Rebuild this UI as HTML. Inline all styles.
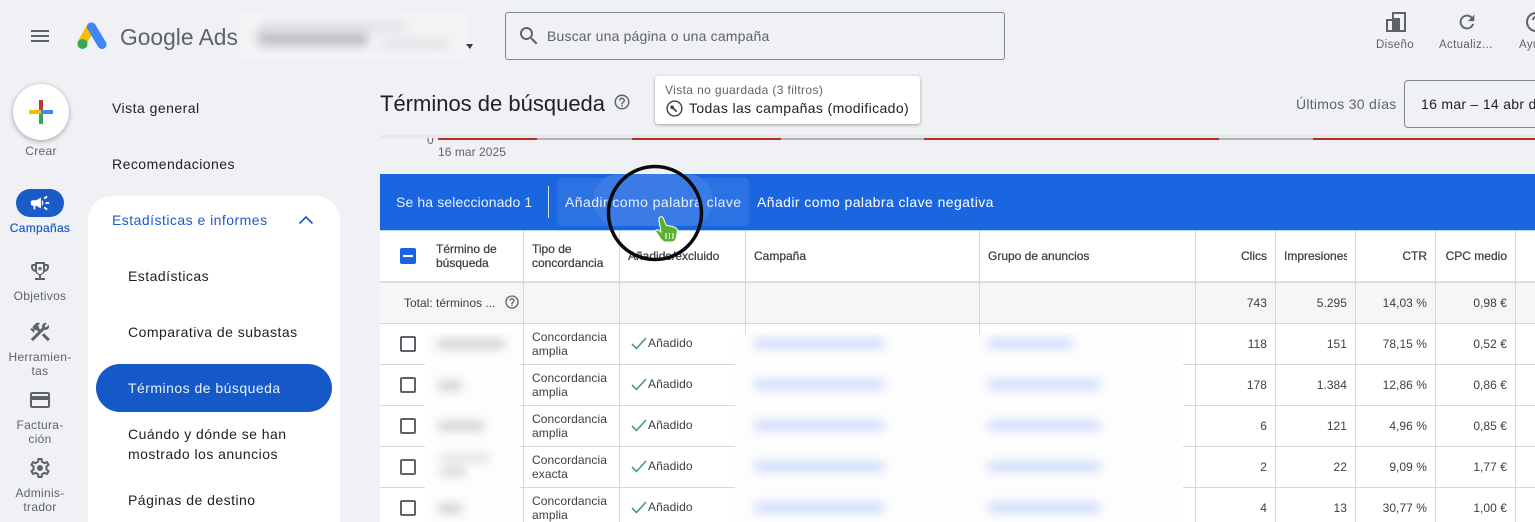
<!DOCTYPE html>
<html lang="es"><head><meta charset="utf-8"><title>Google Ads</title>
<style>
html,body{margin:0;padding:0;width:1535px;height:522px;overflow:hidden;background:#eff1f4}
body{position:relative;font-family:"Liberation Sans",sans-serif;color:#202124}
.t,.b,svg{position:absolute}
.t{white-space:nowrap;line-height:14px}
.nav{font-size:14px;letter-spacing:.47px;color:#202124;left:112px}
.sub{left:128px}
.rail{font-size:12px;letter-spacing:.3px;color:#5f6368;width:80px;text-align:center;left:0;line-height:14px;white-space:normal}
.h{font-size:12px;color:#3c4043;line-height:14px;letter-spacing:0;-webkit-text-stroke:.25px #3c4043}
.c{font-size:12px;color:#3c4043;letter-spacing:.08px;line-height:14px}
.n{font-size:12px;color:#3c4043;text-align:right;letter-spacing:.05px}
.v{background:#d5d7db;width:1px}
.l{background:#d5d7db;height:1px}
.cb{width:12px;height:12px;border:2px solid #5f6368;border-radius:2px;left:400px;background:#fff}
.blur{filter:blur(5px);border-radius:3px}
</style></head><body>

<!-- top bar -->
<svg style="left:28px;top:24px" width="24" height="24" viewBox="0 0 24 24"><path fill="#5f6368" d="M3 18h18v-2H3v2zm0-5h18v-2H3v2zm0-7v2h18V6H3z"/></svg>
<svg style="left:76px;top:21px" width="32" height="29" viewBox="0 0 32 29">
<path d="M15 6 L6 22" stroke="#fbbc04" stroke-width="9" stroke-linecap="round"/>
<path d="M15.5 6 L26 23.5" stroke="#4285f4" stroke-width="9" stroke-linecap="round"/>
<circle cx="6.5" cy="23" r="5" fill="#34a853"/></svg>
<div class="t" style="left:120px;top:24px;font-size:22.8px;line-height:26px;color:#5f6368">Google Ads</div>
<div class="b" style="left:240px;top:12px;width:228px;height:48px;background:#f3f4f6;filter:blur(2px)"></div>
<div class="b blur" style="left:258px;top:30px;width:110px;height:16px;background:#bfc1c4"></div>
<div class="b blur" style="left:262px;top:23px;width:145px;height:8px;background:#dcdee1"></div>
<div class="b blur" style="left:382px;top:41px;width:66px;height:6px;background:#d5d7da"></div>
<svg style="left:465px;top:42px" width="10" height="8"><path d="M1 2h7L5 7z" fill="#3c4043"/></svg>

<div class="b" style="left:505px;top:12px;width:498px;height:46px;border:1px solid #80868b;border-radius:3px"></div>
<svg style="left:517px;top:24px" width="24" height="24" viewBox="0 0 24 24"><path fill="#5f6368" d="M15.5 14h-.79l-.28-.27A6.47 6.47 0 0 0 16 9.5 6.5 6.5 0 1 0 9.5 16c1.61 0 3.09-.59 4.23-1.57l.27.28v.79l5 4.99L20.49 19l-4.99-5zm-6 0C7.01 14 5 11.99 5 9.5S7.01 5 9.5 5 14 7.01 14 9.5 11.99 14 9.5 14z"/></svg>
<div class="t" style="left:547px;top:29px;font-size:14px;color:#5f6368;letter-spacing:.17px">Buscar una página o una campaña</div>

<svg style="left:1385px;top:12px" width="21" height="20" viewBox="0 0 21 20"><path fill="#5f6368" fill-rule="evenodd" d="M1 7h6V0h14v20H1zM3 9v9h4V9zM9 2v16h10V2z"/><rect x="9" y="6" width="6" height="12" fill="#5f6368"/></svg>
<div class="t" style="left:1376px;top:38px;font-size:11.5px;letter-spacing:.36px;color:#5f6368">Diseño</div>
<svg style="left:1456px;top:11px" width="22" height="22" viewBox="0 0 24 24"><path fill="#5f6368" d="M17.65 6.35A7.96 7.96 0 0 0 12 4a8 8 0 1 0 7.73 10h-2.08A6 6 0 1 1 12 6c1.66 0 3.14.69 4.22 1.78L13 11h7V4l-2.35 2.35z"/></svg>
<div class="t" style="left:1439px;top:38px;font-size:11.5px;letter-spacing:.35px;color:#5f6368">Actualiz...</div>
<svg style="left:1524px;top:10px" width="24" height="24" viewBox="0 0 24 24"><path fill="#5f6368" d="M11 18h2v-2h-2v2zm1-16a10 10 0 1 0 0 20 10 10 0 0 0 0-20zm0 18a8 8 0 1 1 0-16 8 8 0 0 1 0 16zm0-14a4 4 0 0 0-4 4h2a2 2 0 1 1 4 0c0 2-3 1.75-3 5h2c0-2.25 3-2.5 3-5a4 4 0 0 0-4-4z"/></svg>
<div class="t" style="left:1519px;top:38px;font-size:11.5px;letter-spacing:.35px;color:#5f6368">Ayuda</div>

<!-- left rail -->
<div class="b" style="left:13px;top:84px;width:56px;height:56px;border-radius:50%;background:#fff;box-shadow:0 1px 4px rgba(60,64,67,.35),0 2px 6px rgba(60,64,67,.12)"></div>
<div class="b" style="left:39px;top:100px;width:4px;height:12px;background:#b93a32"></div>
<div class="b" style="left:39px;top:112px;width:4px;height:12px;background:#34a853"></div>
<div class="b" style="left:29px;top:110px;width:12px;height:4px;background:#f6b90d"></div>
<div class="b" style="left:41px;top:110px;width:12px;height:4px;background:#4285f4"></div>
<div class="t rail" style="top:144px;left:1px;color:#5f6368">Crear</div>

<div class="b" style="left:16px;top:189px;width:48px;height:28px;border-radius:14px;background:#1a5bc9"></div>
<svg style="left:29px;top:192px" width="22" height="22" viewBox="0 0 24 24"><path fill="#fff" d="M18 11v2h4v-2h-4zm-2 6.61c.96.71 2.21 1.65 3.2 2.39.4-.53.8-1.07 1.2-1.6-.99-.74-2.24-1.68-3.2-2.4-.4.54-.8 1.08-1.2 1.61zM20.4 5.6c-.4-.53-.8-1.07-1.2-1.6-.99.74-2.24 1.68-3.2 2.4.4.53.8 1.07 1.2 1.6.96-.72 2.21-1.65 3.2-2.4zM4 9c-1.1 0-2 .9-2 2v2c0 1.1.9 2 2 2h1v4h2v-4h1l5 3V6L8 9H4zm11.5 3c0-1.33-.58-2.53-1.5-3.35v6.69c.92-.81 1.5-2.01 1.5-3.34z"/></svg>
<div class="t rail" style="top:221px;color:#1a5bc9;-webkit-text-stroke:.2px #1a5bc9">Campañas</div>

<svg style="left:28px;top:259px" width="24" height="24" viewBox="0 0 24 24"><path fill="#5f6368" fill-rule="evenodd" d="M19 5h-2V3H7v2H5c-1.1 0-2 .9-2 2v1c0 2.55 1.92 4.63 4.39 4.94.63 1.5 1.98 2.63 3.61 2.96V19H7v2h10v-2h-4v-3.1c1.63-.33 2.98-1.46 3.61-2.96C19.08 12.63 21 10.55 21 8V7c0-1.1-.9-2-2-2zM5 8V7h2v3.82C5.84 10.4 5 9.3 5 8zm14 0c0 1.3-.84 2.4-2 2.82V7h2v1zM15 12c0 1.65-1.35 3-3 3s-3-1.35-3-3V5h6v7z"/><circle cx="12" cy="9.5" r="1.6" fill="#5f6368"/></svg>
<div class="t rail" style="top:289px">Objetivos</div>

<svg style="left:28px;top:320px" width="24" height="24" viewBox="0 0 24 24"><path fill="#5f6368" d="M13.78 15.3l6 6 2.11-2.16-6-6zM17.5 10c1.93 0 3.5-1.57 3.5-3.5 0-.58-.16-1.12-.41-1.6l-2.7 2.7-1.49-1.49 2.7-2.7c-.48-.25-1.02-.41-1.6-.41C15.57 3 14 4.57 14 6.5c0 .41.08.8.21 1.16l-1.85 1.85-1.78-1.78.71-.71-1.41-1.41L12 3.49c-1.17-1.17-3.07-1.17-4.24 0L4.22 7.03l1.41 1.41H2.81l-.71.71 3.54 3.54.71-.71V9.15l1.41 1.41.71-.71 1.78 1.78-7.41 7.41 2.12 2.12L16.34 9.79c.36.13.75.21 1.16.21z"/></svg>
<div class="t rail" style="top:350px">Herramien-<br>tas</div>

<svg style="left:28px;top:388px" width="24" height="24" viewBox="0 0 24 24"><path fill="#5f6368" d="M20 4H4c-1.11 0-1.99.89-1.99 2L2 18c0 1.11.89 2 2 2h16c1.11 0 2-.89 2-2V6c0-1.11-.89-2-2-2zm0 14H4v-6h16v6zm0-10H4V6h16v2z"/></svg>
<div class="t rail" style="top:418px">Factura-<br>ción</div>

<svg style="left:28px;top:456px" width="24" height="24" viewBox="0 0 24 24"><path fill="#5f6368" d="M19.43 12.98c.04-.32.07-.64.07-.98 0-.34-.03-.66-.07-.98l2.11-1.65c.19-.15.24-.42.12-.64l-2-3.46c-.09-.16-.26-.25-.44-.25-.06 0-.12.01-.17.03l-2.49 1c-.52-.4-1.08-.73-1.69-.98l-.38-2.65C14.46 2.18 14.25 2 14 2h-4c-.25 0-.46.18-.49.42l-.38 2.65c-.61.25-1.17.59-1.69.98l-2.49-1c-.06-.02-.12-.03-.18-.03-.17 0-.34.09-.43.25l-2 3.46c-.13.22-.07.49.12.64l2.11 1.65c-.04.32-.07.65-.07.98 0 .33.03.66.07.98l-2.11 1.65c-.19.15-.24.42-.12.64l2 3.46c.09.16.26.25.44.25.06 0 .12-.01.17-.03l2.49-1c.52.4 1.08.73 1.69.98l.38 2.65c.03.24.24.42.49.42h4c.25 0 .46-.18.49-.42l.38-2.65c.61-.25 1.17-.59 1.69-.98l2.49 1c.06.02.12.03.18.03.17 0 .34-.09.43-.25l2-3.46c.12-.22.07-.49-.12-.64l-2.11-1.65zm-1.98-1.71c.04.31.05.52.05.73 0 .21-.02.43-.05.73l-.14 1.13.89.7 1.08.84-.7 1.21-1.27-.51-1.04-.42-.9.68c-.43.32-.84.56-1.25.73l-1.06.43-.16 1.13-.2 1.35h-1.4l-.19-1.35-.16-1.13-1.06-.43c-.43-.18-.83-.41-1.23-.71l-.91-.7-1.06.43-1.27.51-.7-1.21 1.08-.84.89-.7-.14-1.13c-.03-.31-.05-.54-.05-.74s.02-.43.05-.73l.14-1.13-.89-.7-1.08-.84.7-1.21 1.27.51 1.04.42.9-.68c.43-.32.84-.56 1.25-.73l1.06-.43.16-1.13.2-1.35h1.39l.19 1.35.16 1.13 1.06.43c.43.18.83.41 1.23.71l.91.7 1.06-.43 1.27-.51.7 1.21-1.07.85-.89.7.14 1.13z"/><circle cx="12" cy="12" r="3" fill="#5f6368"/></svg>
<div class="t rail" style="top:486px">Adminis-<br>trador</div>

<!-- nav -->
<div class="t nav" style="top:101px">Vista general</div>
<div class="t nav" style="top:157px">Recomendaciones</div>
<div class="b" style="left:88px;top:196px;width:252px;height:340px;background:#fff;border-radius:24px 24px 0 0"></div>
<div class="t nav" style="top:213px;color:#1a5bc9">Estadísticas e informes</div>
<svg style="left:296px;top:210px" width="20" height="20" viewBox="0 0 20 20"><path d="M3.5 13.5 10 7l6.5 6.5" fill="none" stroke="#1a5bc9" stroke-width="1.6"/></svg>
<div class="t nav sub" style="top:269px">Estadísticas</div>
<div class="t nav sub" style="top:325px">Comparativa de subastas</div>
<div class="b" style="left:96px;top:364px;width:236px;height:48px;border-radius:24px;background:#1558c8"></div>
<div class="t nav sub" style="top:381px;color:#e8f0fe">Términos de búsqueda</div>
<div class="t nav sub" style="top:424px;line-height:20px">Cuándo y dónde se han<br>mostrado los anuncios</div>
<div class="t nav sub" style="top:493px">Páginas de destino</div>

<!-- page header -->
<div class="t" style="left:380px;top:91px;font-size:22px;line-height:26px;letter-spacing:0;color:#202124">Términos de búsqueda</div>
<svg style="left:613px;top:93px" width="18" height="18" viewBox="0 0 24 24"><path fill="#5f6368" d="M11 18h2v-2h-2v2zm1-16a10 10 0 1 0 0 20 10 10 0 0 0 0-20zm0 18a8 8 0 1 1 0-16 8 8 0 0 1 0 16zm0-14a4 4 0 0 0-4 4h2a2 2 0 1 1 4 0c0 2-3 1.75-3 5h2c0-2.25 3-2.5 3-5a4 4 0 0 0-4-4z"/></svg>
<div class="b" style="left:655px;top:76px;width:265px;height:48px;background:#fff;border-radius:3px;box-shadow:0 1px 3px rgba(60,64,67,.45)"></div>
<div class="t" style="left:665px;top:83px;font-size:12px;letter-spacing:.38px;color:#5f6368">Vista no guardada (3 filtros)</div>
<svg style="left:666px;top:100px" width="17" height="17" viewBox="0 0 17 17"><circle cx="8.5" cy="8.5" r="7.4" fill="none" stroke="#3c4043" stroke-width="1.4"/><path d="M5 5.5a2.2 2.2 0 0 1 3 2.4l3.3 3.2-1.2 1.2-3.3-3.2A2.2 2.2 0 0 1 4.2 7z" fill="#3c4043"/></svg>
<div class="t" style="left:689px;top:101px;font-size:14px;letter-spacing:.37px;color:#202124">Todas las campañas (modificado)</div>
<div class="t" style="left:1296px;top:97px;font-size:14px;letter-spacing:.27px;color:#5f6368">Últimos 30 días</div>
<div class="b" style="left:1404px;top:80px;width:160px;height:46px;border:1px solid #80868b;border-radius:4px"></div>
<div class="t" style="left:1421px;top:97px;font-size:14px;letter-spacing:.3px;color:#202124">16 mar – 14 abr de 2025</div>

<!-- chart strip -->
<div class="t" style="left:427px;top:133px;font-size:12px;color:#5f6368">0</div>
<div class="b" style="left:380px;top:135px;width:1155px;height:3px;background:#e8e8e9"></div>
<div class="b" style="left:438px;top:138px;width:99px;height:1.5px;background:#b3302a"></div>
<div class="b" style="left:537px;top:138px;width:95px;height:1.5px;background:#b0b2b5"></div>
<div class="b" style="left:632px;top:138px;width:149px;height:1.5px;background:#b3302a"></div>
<div class="b" style="left:781px;top:138px;width:143px;height:1.5px;background:#b0b2b5"></div>
<div class="b" style="left:924px;top:138px;width:295px;height:1.5px;background:#b3302a"></div>
<div class="b" style="left:1219px;top:138px;width:94px;height:1.5px;background:#b0b2b5"></div>
<div class="b" style="left:1313px;top:138px;width:222px;height:1.5px;background:#b3302a"></div>
<div class="t" style="left:438px;top:145px;font-size:12px;letter-spacing:.05px;color:#5f6368">16 mar 2025</div>

<!-- table -->
<div class="b" style="left:380px;top:231px;width:1155px;height:291px;background:#fff"></div>
<div class="b" style="left:380px;top:283px;width:1155px;height:40px;background:#f6f6f6"></div>
<div class="b" style="left:380px;top:281px;width:1155px;height:2px;background:#dcdde0"></div>
<div class="b l" style="left:380px;top:323px;width:1155px"></div>
<div class="b l" style="left:380px;top:364px;width:1155px"></div>
<div class="b l" style="left:380px;top:405px;width:1155px"></div>
<div class="b l" style="left:380px;top:446px;width:1155px"></div>
<div class="b l" style="left:380px;top:487px;width:1155px"></div>
<div class="b v" style="left:523px;top:231px;height:291px"></div>
<div class="b v" style="left:619px;top:231px;height:291px"></div>
<div class="b v" style="left:745px;top:231px;height:103px"></div>
<div class="b v" style="left:979px;top:231px;height:103px"></div>
<div class="b v" style="left:1195px;top:231px;height:291px"></div>
<div class="b v" style="left:1275px;top:231px;height:291px"></div>
<div class="b v" style="left:1355px;top:231px;height:291px"></div>
<div class="b v" style="left:1435px;top:231px;height:291px"></div>
<div class="b v" style="left:1515px;top:231px;height:291px"></div>

<!-- blurred patches -->
<div class="b" style="left:425px;top:334px;width:95px;height:188px;background:#fdfdfd"></div>
<div class="b" style="left:735px;top:334px;width:448px;height:188px;background:#fdfdfe"></div>
<div class="b blur" style="left:437px;top:340px;width:68px;height:8px;background:#c8c9cb"></div>
<div class="b blur" style="left:438px;top:381px;width:24px;height:9px;background:#cbcccf"></div>
<div class="b blur" style="left:438px;top:422px;width:46px;height:8px;background:#c8c9cb"></div>
<div class="b blur" style="left:440px;top:455px;width:50px;height:6px;background:#d5d6d8"></div>
<div class="b blur" style="left:440px;top:468px;width:26px;height:7px;background:#cbcccf"></div>
<div class="b blur" style="left:438px;top:504px;width:24px;height:9px;background:#cbcccf"></div>
<div class="b blur" style="left:754px;top:339px;width:130px;height:9px;background:#c9d7fb"></div>
<div class="b blur" style="left:754px;top:380px;width:130px;height:9px;background:#c9d7fb"></div>
<div class="b blur" style="left:754px;top:421px;width:130px;height:9px;background:#c9d7fb"></div>
<div class="b blur" style="left:754px;top:462px;width:130px;height:9px;background:#c9d7fb"></div>
<div class="b blur" style="left:754px;top:503px;width:130px;height:9px;background:#c9d7fb"></div>
<div class="b blur" style="left:988px;top:339px;width:84px;height:9px;background:#c9d7fb"></div>
<div class="b blur" style="left:988px;top:380px;width:112px;height:9px;background:#c9d7fb"></div>
<div class="b blur" style="left:988px;top:421px;width:112px;height:9px;background:#c9d7fb"></div>
<div class="b blur" style="left:988px;top:462px;width:112px;height:9px;background:#c9d7fb"></div>
<div class="b blur" style="left:988px;top:503px;width:112px;height:9px;background:#c9d7fb"></div>

<!-- headers -->
<div class="b" style="left:400px;top:248px;width:16px;height:16px;border-radius:2px;background:#1a66e0"></div>
<div class="b" style="left:403px;top:255px;width:10px;height:2px;background:#fff"></div>
<div class="t h" style="left:436px;top:242px">Término de<br>búsqueda</div>
<div class="t h" style="left:532px;top:242px">Tipo de<br>concordancia</div>
<div class="t h" style="left:628px;top:249px">Añadido/excluido</div>
<div class="t h" style="left:754px;top:249px">Campaña</div>
<div class="t h" style="left:988px;top:249px">Grupo de anuncios</div>
<div class="t h" style="left:1195px;width:72px;text-align:right;top:249px">Clics</div>
<div class="t h" style="left:1284px;top:249px;width:63px;overflow:hidden">Impresiones</div>
<div class="t h" style="left:1355px;width:72px;text-align:right;top:249px">CTR</div>
<div class="t h" style="left:1435px;width:72px;text-align:right;top:249px">CPC medio</div>

<div class="t c" style="left:404px;top:296px;letter-spacing:0">Total: términos ...</div>
<svg style="left:504px;top:294px" width="16" height="16" viewBox="0 0 24 24"><path fill="#5f6368" d="M11 18h2v-2h-2v2zm1-16a10 10 0 1 0 0 20 10 10 0 0 0 0-20zm0 18a8 8 0 1 1 0-16 8 8 0 0 1 0 16zm0-14a4 4 0 0 0-4 4h2a2 2 0 1 1 4 0c0 2-3 1.75-3 5h2c0-2.25 3-2.5 3-5a4 4 0 0 0-4-4z"/></svg>
<div class="t n" style="left:1195px;width:72px;top:296px">743</div>
<div class="t n" style="left:1275px;width:72px;top:296px">5.295</div>
<div class="t n" style="left:1355px;width:72px;top:296px">14,03 %</div>
<div class="t n" style="left:1435px;width:72px;top:296px">0,98 €</div>

<!-- row 1 -->
<div class="b cb" style="top:336px"></div>
<div class="t c" style="left:532px;top:330px">Concordancia<br>amplia</div>
<svg style="left:631px;top:336px" width="16" height="14" viewBox="0 0 16 14"><path d="M1 8l4.5 4.5L15 2" fill="none" stroke="#4b9a78" stroke-width="1.6"/></svg>
<div class="t c" style="left:648px;top:336px">Añadido</div>
<div class="t n" style="left:1195px;width:72px;top:337px">118</div>
<div class="t n" style="left:1275px;width:72px;top:337px">151</div>
<div class="t n" style="left:1355px;width:72px;top:337px">78,15 %</div>
<div class="t n" style="left:1435px;width:72px;top:337px">0,52 €</div>
<!-- row 2 -->
<div class="b cb" style="top:377px"></div>
<div class="t c" style="left:532px;top:371px">Concordancia<br>amplia</div>
<svg style="left:631px;top:377px" width="16" height="14" viewBox="0 0 16 14"><path d="M1 8l4.5 4.5L15 2" fill="none" stroke="#4b9a78" stroke-width="1.6"/></svg>
<div class="t c" style="left:648px;top:377px">Añadido</div>
<div class="t n" style="left:1195px;width:72px;top:378px">178</div>
<div class="t n" style="left:1275px;width:72px;top:378px">1.384</div>
<div class="t n" style="left:1355px;width:72px;top:378px">12,86 %</div>
<div class="t n" style="left:1435px;width:72px;top:378px">0,86 €</div>
<!-- row 3 -->
<div class="b cb" style="top:418px"></div>
<div class="t c" style="left:532px;top:412px">Concordancia<br>amplia</div>
<svg style="left:631px;top:418px" width="16" height="14" viewBox="0 0 16 14"><path d="M1 8l4.5 4.5L15 2" fill="none" stroke="#4b9a78" stroke-width="1.6"/></svg>
<div class="t c" style="left:648px;top:418px">Añadido</div>
<div class="t n" style="left:1195px;width:72px;top:419px">6</div>
<div class="t n" style="left:1275px;width:72px;top:419px">121</div>
<div class="t n" style="left:1355px;width:72px;top:419px">4,96 %</div>
<div class="t n" style="left:1435px;width:72px;top:419px">0,85 €</div>
<!-- row 4 -->
<div class="b cb" style="top:459px"></div>
<div class="t c" style="left:532px;top:453px">Concordancia<br>exacta</div>
<svg style="left:631px;top:459px" width="16" height="14" viewBox="0 0 16 14"><path d="M1 8l4.5 4.5L15 2" fill="none" stroke="#4b9a78" stroke-width="1.6"/></svg>
<div class="t c" style="left:648px;top:459px">Añadido</div>
<div class="t n" style="left:1195px;width:72px;top:460px">2</div>
<div class="t n" style="left:1275px;width:72px;top:460px">22</div>
<div class="t n" style="left:1355px;width:72px;top:460px">9,09 %</div>
<div class="t n" style="left:1435px;width:72px;top:460px">1,77 €</div>
<!-- row 5 -->
<div class="b cb" style="top:500px"></div>
<div class="t c" style="left:532px;top:494px">Concordancia<br>amplia</div>
<svg style="left:631px;top:500px" width="16" height="14" viewBox="0 0 16 14"><path d="M1 8l4.5 4.5L15 2" fill="none" stroke="#4b9a78" stroke-width="1.6"/></svg>
<div class="t c" style="left:648px;top:500px">Añadido</div>
<div class="t n" style="left:1195px;width:72px;top:501px">4</div>
<div class="t n" style="left:1275px;width:72px;top:501px">13</div>
<div class="t n" style="left:1355px;width:72px;top:501px">30,77 %</div>
<div class="t n" style="left:1435px;width:72px;top:501px">1,00 €</div>

<!-- blue action bar -->
<div class="b" style="left:380px;top:174px;width:1155px;height:56px;background:#1a66e0"></div>
<div class="b" style="left:380px;top:230px;width:1155px;height:1px;background:#bcd4f8"></div>
<div class="b" style="left:557px;top:178px;width:192px;height:48px;border-radius:4px;background:#2b72e3"></div>
<div class="b" style="left:593px;top:174px;width:120px;height:52px;border-radius:30px;background:#3a7be5"></div>
<div class="t" style="left:396px;top:195px;font-size:14px;letter-spacing:.12px;color:#e8f0fe">Se ha seleccionado 1</div>
<div class="b" style="left:548px;top:186px;width:1px;height:32px;background:#d2e3fc"></div>
<div class="t" style="left:565px;top:195px;font-size:14px;letter-spacing:.43px;color:#e8f0fe">Añadir como palabra clave</div>
<div class="t" style="left:757px;top:195px;font-size:14px;letter-spacing:.42px;color:#fff">Añadir como palabra clave negativa</div>

<!-- cursor highlight -->
<svg style="left:600px;top:158px" width="112" height="112" viewBox="0 0 112 112"><circle cx="55" cy="55" r="46.5" fill="none" stroke="#0a0a0a" stroke-width="3.5"/></svg>
<svg style="left:654px;top:215px" width="26" height="30" viewBox="0 0 26 30">
<path d="M6 2c1.5-1 3 0 3.5 1.5L12 10l8 2c2 .6 3.5 2 3.5 4l-1 6c-.4 2.5-2 5-5 5h-6c-2 0-3.5-1.5-5-3.5L2 17c-1-1.5 1-3 2.5-2L7 17 5 6C4.6 4.3 4.8 2.8 6 2z" fill="#5cb032" stroke="#fff" stroke-width="1"/>
<path d="M12 18v6M15.5 18v6M19 18v6" stroke="#fff" stroke-width="1.1"/></svg>
</body></html>
